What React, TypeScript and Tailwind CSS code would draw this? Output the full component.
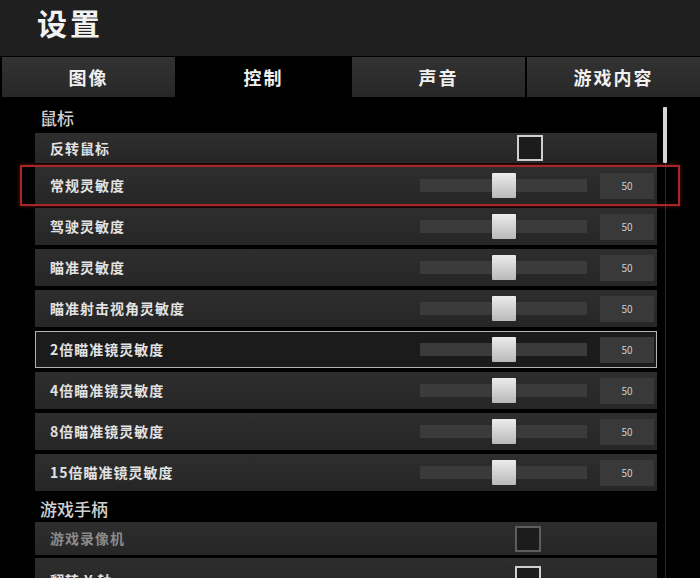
const font = { fontFamily: '"Noto Sans CJK SC", "Noto Sans", sans-serif' };

const tabs = ["图像", "控制", "声音", "游戏内容"];

const sliders = [
  { label: "常规灵敏度", value: 50, highlight: true },
  { label: "驾驶灵敏度", value: 50 },
  { label: "瞄准灵敏度", value: 50 },
  { label: "瞄准射击视角灵敏度", value: 50 },
  { label: "2倍瞄准镜灵敏度", value: 50, selected: true },
  { label: "4倍瞄准镜灵敏度", value: 50 },
  { label: "8倍瞄准镜灵敏度", value: 50 },
  { label: "15倍瞄准镜灵敏度", value: 50 },
];

const Checkbox = ({ dim }: { dim?: boolean }) => (
  <div
    className={`w-[26px] h-[26px] bg-[#1c1c1c] border-2 ${
      dim ? "border-[#5e5e5e]" : "border-[#cfcfcf]"
    }`}
  />
);

const SliderRow = ({
  label,
  value,
  highlight,
  selected,
}: {
  label: string;
  value: number;
  highlight?: boolean;
  selected?: boolean;
}) => (
  <div
    className={`relative h-[37px] mb-[4px] flex items-center ${
      selected
        ? "bg-[#1b1b1b] shadow-[inset_0_0_0_1px_#b4b4b4]"
        : "bg-linear-to-b from-[#2e2e2e] to-[#262626]"
    }`}
  >
    <span className="flex-1 pl-[15px] text-[14px] font-bold tracking-[1px] text-[#e2e2e2]">
      {label}
    </span>
    <div className="relative w-[167px] h-[13px] bg-[#3b3b3b]">
      <div
        className="absolute top-[-6px] w-[24px] h-[25px] -ml-[12px] bg-linear-to-b from-[#ececec] to-[#b9b9b9] rounded-[1px]"
        style={{ left: `${value}%` }}
      />
    </div>
    <div className="ml-[13px] mr-[3px] w-[54px] h-[26px] bg-[#393939] flex items-center justify-center text-[10px] text-[#cfcfcf]">
      {value}
    </div>
    {highlight && (
      <div className="absolute -left-[15px] -right-[23px] -top-[2px] -bottom-[2px] border-2 border-[#a82626] shadow-[0_0_4px_rgba(190,40,40,0.55)] pointer-events-none" />
    )}
  </div>
);

export default function App() {
  return (
    <div className="w-[700px] h-[578px] overflow-hidden bg-black" style={font}>
      <header className="h-[56px] bg-[#1f1f1f] pl-[37px] pt-[4px]">
        <h1 className="text-[30px] leading-[36px] font-bold tracking-[3px] text-[#f2f2f2]">
          设置
        </h1>
      </header>
      <nav className="mt-[1px] h-[40px] grid grid-cols-4 gap-[2px] pl-[2px]">
        {tabs.map((tab, index) => (
          <div
            key={tab}
            className={`flex items-center justify-center text-[18px] font-bold tracking-[2px] text-[#f0f0f0] ${
              index === 1 ? "bg-black" : "bg-linear-to-b from-[#333333] to-[#272727]"
            }`}
          >
            {tab}
          </div>
        ))}
      </nav>
      <div className="flex">
        <main className="ml-[35px] w-[622px]">
          <div className="h-[36px] pt-[6px] flex items-center pl-[5px] text-[17px] font-medium text-[#d0d0d0]">
            鼠标
          </div>
          <div className="h-[30px] mb-[4px] flex items-center bg-linear-to-b from-[#2e2e2e] to-[#262626]">
            <span className="flex-1 pl-[15px] text-[14px] font-bold tracking-[1px] text-[#e2e2e2]">
              反转鼠标
            </span>
            <div className="mr-[114px]">
              <Checkbox />
            </div>
          </div>
          {sliders.map((s) => (
            <SliderRow key={s.label} {...s} />
          ))}
          <div className="h-[27px] flex items-center pl-[5px] text-[17px] font-medium text-[#d0d0d0]">
            游戏手柄
          </div>
          <div className="h-[33px] mb-[3px] flex items-center bg-linear-to-b from-[#2e2e2e] to-[#262626]">
            <span className="flex-1 pl-[15px] text-[14px] font-bold tracking-[1px] text-[#8a8a8a]">
              游戏录像机
            </span>
            <div className="mr-[116px]">
              <Checkbox dim />
            </div>
          </div>
          <div className="h-[33px] flex items-center bg-linear-to-b from-[#2e2e2e] to-[#262626]">
            <span className="flex-1 pl-[15px] pt-[12px] text-[14px] font-bold tracking-[1px] text-[#e2e2e2]">
              翻转 Y 轴
            </span>
            <div className="mr-[116px] pt-[8px]">
              <Checkbox />
            </div>
          </div>
        </main>
        <div className="ml-[6px] w-[4px] pt-[10px] flex flex-col items-center">
          <div className="w-[4px] h-[56px] bg-[#d6d6d6] rounded-[1px]" />
          <div className="w-[1px] h-[420px] bg-[#2c2c2c]" />
        </div>
      </div>
    </div>
  );
}
